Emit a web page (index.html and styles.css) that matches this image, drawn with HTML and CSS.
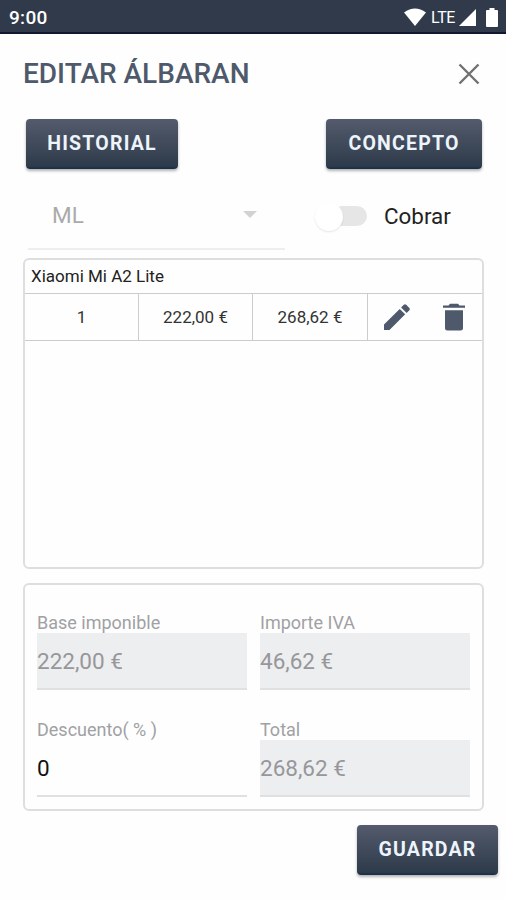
FILE: index.html
```html
<!DOCTYPE html>
<html lang="es">
<head>
<meta charset="utf-8">
<title>Editar álbaran</title>
<link rel="stylesheet" href="styles.css">
</head>
<body>
<div class="status">
  <span class="clock">9:00</span>
  <svg class="wifi" width="22" height="18" viewBox="0 0 22 18"><path fill="#fff" d="M0 4.500Q11-3.600 22 4.500L11 18Z"/></svg>
  <span class="lte">LTE</span>
  <svg class="signal" width="17" height="17" viewBox="0 0 17 17"><path fill="#fff" d="M17 0V17H0Z"/></svg>
  <svg class="battery" width="12" height="19" viewBox="0 0 12 19"><path fill="#fff" d="M3.500 0h5v2H11q1 0 1 1V18q0 1-1 1H1q-1 0-1-1V3q0-1 1-1h2.500Z"/></svg>
</div>
<header class="header">
  <h1 class="title">EDITAR ÁLBARAN</h1>
  <svg class="close" width="22" height="22" viewBox="0 0 22 22"><path d="M1.500 1.500 20.500 20.500M20.500 1.500 1.500 20.500" stroke="#717171" stroke-width="2.400" fill="none"/></svg>
</header>
<div class="actions">
  <button class="btn historial">HISTORIAL</button>
  <button class="btn concepto">CONCEPTO</button>
</div>
<div class="options">
  <div class="select"><span class="select-value">ML</span><span class="caret"></span></div>
  <div class="switch"><span class="knob"></span></div>
  <span class="switch-label">Cobrar</span>
</div>
<section class="card items">
  <div class="item-name"><span>Xiaomi Mi A2 Lite</span></div>
  <div class="item-row">
    <div class="cell"><span class="qty">1</span></div>
    <div class="cell"><span>222,00 €</span></div>
    <div class="cell"><span>268,62 €</span></div>
    <div class="cell tools">
      <svg width="28" height="28" viewBox="0 0 28 28"><path fill="#4f596c" d="M1 21.500 16.700 5.900 22.200 11.300 6.500 27H1ZM18.100 4.500 20.800 1.700Q22 .700 23.200 1.700L26.400 4.900Q27.400 6 26.400 7.200L23.600 9.900Z"/></svg>
      <svg class="bin" width="22" height="28" viewBox="0 0 22 28"><path fill="#4f596c" d="M0 2.500H5.500L7 .700H15L16.500 2.500H22V4.700H0ZM2 7.200H20V25Q20 27.500 17.500 27.500H4.500Q2 27.500 2 25Z"/></svg>
    </div>
  </div>
</section>
<section class="card totals">
  <div class="field"><label>Base imponible</label><div class="value"><span>222,00 €</span></div></div>
  <div class="field"><label>Importe IVA</label><div class="value"><span>46,62 €</span></div></div>
  <div class="field"><label>Descuento( % )</label><div class="value editable"><span>0</span></div></div>
  <div class="field"><label>Total</label><div class="value"><span>268,62 €</span></div></div>
</section>
<div class="footer"><button class="btn guardar">GUARDAR</button></div>
</body>
</html>
```
FILE: styles.css
```css
* { box-sizing: border-box; }
body {
  margin: 0;
  width: 506px;
  height: 900px;
  overflow: hidden;
  background: #fefefe;
  font-family: Roboto, "Liberation Sans", sans-serif;
  color: #222;
  display: flex;
  flex-direction: column;
}
svg { display: block; flex: none; }
span, label { white-space: nowrap; }
.status {
  height: 34px;
  flex: none;
  background: #303a4a;
  border-bottom: 2px solid #11182f;
  color: #fff;
  display: flex;
  align-items: center;
  padding: 2px 8px 0 9px;
}
.clock { font-size: 19px; font-weight: 500; letter-spacing: 0.3px; margin-right: auto; }
.lte { font-size: 16px; margin: 0 4px 0 5px; letter-spacing: -0.4px; }
.battery { margin-left: 10px; }
.header {
  height: 85px;
  flex: none;
  display: flex;
  align-items: center;
  justify-content: space-between;
  padding: 0 26px 6px 23px;
}
.title {
  margin: 0;
  font-size: 28px;
  font-weight: 500;
  color: #4f596c;
  white-space: nowrap;
}
.actions {
  height: 50px;
  flex: none;
  display: flex;
  justify-content: space-between;
  padding: 0 24px 0 26px;
}
.btn {
  height: 50px;
  border: 0;
  border-radius: 4px;
  padding: 0 0 1px;
  background: linear-gradient(#545b6c, #2e3b4b 94%, #162c48);
  box-shadow: 0 2px 3px rgba(0, 0, 0, .3);
  color: #edf4fb;
  font: 700 19.500px Roboto, sans-serif;
  letter-spacing: 1.200px;
}
.historial { width: 152px; }
.concepto { width: 156px; }
.options {
  height: 81px;
  flex: none;
  display: flex;
  align-items: center;
  margin-bottom: 8px;
  padding: 0 28px;
}
.select {
  width: 257px;
  height: 81px;
  border-bottom: 2px solid #eee;
  display: flex;
  align-items: center;
  padding: 14px 28px 0 24px;
  justify-content: space-between;
}
.select-value { margin-bottom: 2px; font-size: 22.500px; color: #aaa; }
.caret {
  margin-bottom: 2px;
  border: 7px solid transparent;
  border-top-color: #d2d2d2;
  border-bottom: 0;
}
.switch {
  position: relative;
  width: 35px;
  height: 20px;
  margin: 13px 0 0 47px;
  border-radius: 10px;
  background: #e6e6e6;
}
.knob {
  position: absolute;
  left: -17px;
  top: -3px;
  width: 28px;
  height: 28px;
  border-radius: 50%;
  background: #fff;
  box-shadow: 0 1px 2px rgba(0, 0, 0, .1);
}
.switch-label { margin: 12px 0 0 17px; font-size: 22.400px; }
.card {
  width: 461px;
  margin-left: 23px;
  flex: none;
  border: 2px solid #dedede;
  border-radius: 6px;
}
.items { height: 311px; margin-bottom: 14px; }
.item-name {
  height: 34px;
  border-bottom: 1px solid #ccc;
  padding: 6px 0 0 6px;
  font-size: 17px;
  line-height: 20px;
}
.item-row {
  height: 47px;
  border-bottom: 1px solid #ccc;
  display: grid;
  grid-template-columns: 114px 114px 115px 1fr;
}
.cell {
  display: flex;
  align-items: center;
  justify-content: center;
  font-size: 17px;
  color: #333;
  padding-bottom: 1px;
  border-right: 1px solid #ccc;
}
.tools { border-right: 0; gap: 32px; padding: 0 2px 0 0; }
.totals {
  height: 228px;
  display: grid;
  grid-template-columns: 210px 210px;
  grid-template-rows: 107px 107px;
  column-gap: 13px;
  padding: 0 12px;
}
.field { display: flex; flex-direction: column; }
.field label {
  height: 48px;
  padding-top: 27px;
  font-size: 18px;
  line-height: 21px;
  color: #a0a1a3;
}
.value {
  height: 57px;
  background: #edeef0;
  border-bottom: 2px solid #dfe0e2;
  display: flex;
  align-items: center;
  font-size: 22.500px;
  color: #96979a;
}
.editable { background: none; color: #111; }
.footer {
  display: flex;
  justify-content: flex-end;
  padding: 14px 8px 0 0;
}
.guardar { width: 141px; }
```
